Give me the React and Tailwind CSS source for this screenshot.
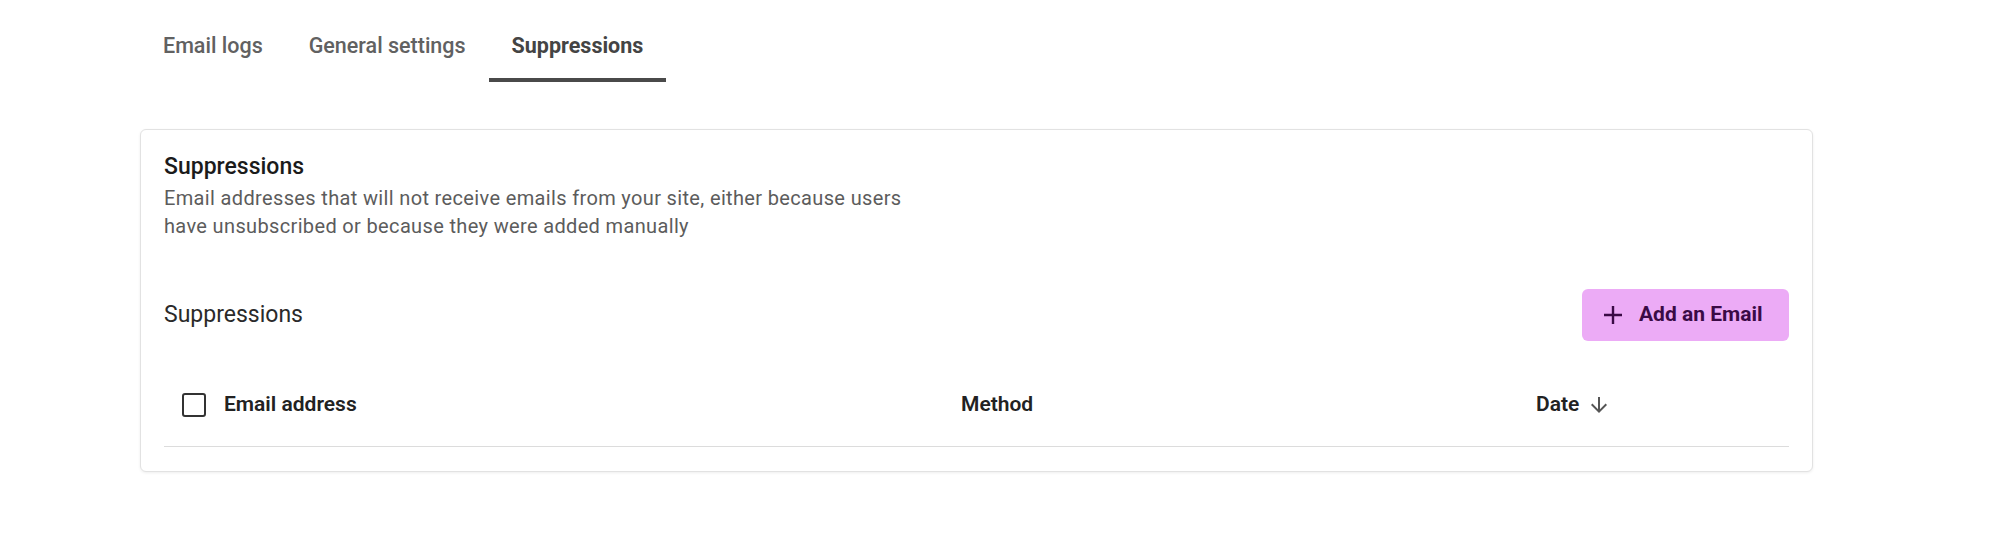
const TABS = [
  { id: 'logs', label: 'Email logs' },
  { id: 'general', label: 'General settings' },
  { id: 'suppressions', label: 'Suppressions' }
]

function Tabs({ active }) {
  return (
    <div className="flex mt-[10px]">
      {TABS.map(tab => (
        <button
          key={tab.id}
          className={`px-[23px] pt-6 pb-5 text-[21.5px] leading-6 border-b-4 ${
            tab.id === active
              ? 'border-[#4a4a4a] text-[#444] font-bold'
              : 'border-transparent text-[#616161] font-medium'
          }`}
        >
          {tab.label}
        </button>
      ))}
    </div>
  )
}

function Checkbox() {
  return <span className="block w-6 h-6 rounded-[3px] border-[2.5px] border-[#333]" />
}

export default function App() {
  return (
    <div className="min-h-screen bg-white pl-[140px] font-['Roboto',sans-serif]">
      <Tabs active="suppressions" />

      <div className="mt-[47px] w-[1673px] bg-white border border-[#e2e2e2] rounded-[6px] shadow-[0_1px_3px_rgba(0,0,0,0.07)] px-[23px] pt-[23px] pb-6">
        <h2 className="text-[23px] leading-7 font-medium text-[#1b1b1b]">Suppressions</h2>
        <p className="mt-[3px] max-w-[770px] text-[20px] tracking-[0.35px] leading-7 text-[#5c5c5c]">
          Email addresses that will not receive emails from your site, either because users have unsubscribed or because they were added manually
        </p>

        <div className="mt-[49px] flex items-center justify-between">
          <h3 className="text-[23px] leading-7 text-[#2a2a2a]">Suppressions</h3>
          <button className="h-[52px] w-[207px] inline-flex items-center gap-[17px] pl-[22px] bg-[#ecabf6] rounded-[6px] text-[21px] font-bold text-[#3a0a45]">
            <svg viewBox="0 0 18 18" className="w-[18px] h-[18px]" fill="none" stroke="currentColor" strokeWidth="2.4">
              <path d="M9 0v18M0 9h18" />
            </svg>
            Add an Email
          </button>
        </div>

        <div className="mt-[23px] h-[83px] grid grid-cols-[779px_575px_1fr] items-center border-b border-[#dcdcdc] text-[21px] font-semibold text-[#222]">
          <div className="pl-[18px] flex items-center gap-[18px]">
            <Checkbox />
            Email address
          </div>
          <div className="pl-[18px]">Method</div>
          <div className="pl-[18px] flex items-center gap-2">
            Date
            <svg viewBox="0 0 24 24" className="w-6 h-6 text-[#555]" fill="currentColor">
              <path d="M20 12l-1.41-1.41L13 16.17V4h-2v12.17l-5.58-5.59L4 12l8 8 8-8z" />
            </svg>
          </div>
        </div>
      </div>
    </div>
  )
}
